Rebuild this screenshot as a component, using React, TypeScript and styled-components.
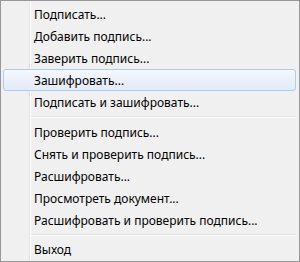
import React from 'react';
import styled, { createGlobalStyle } from 'styled-components';

const GlobalStyle = createGlobalStyle`
  html, body {
    margin: 0;
    padding: 0;
    background: #ffffff;
  }
`;

const Menu = styled.div`
  box-sizing: border-box;
  width: 300px;
  height: 262px;
  border: 1px solid #979797;
  padding: 2px 3px 1px 2px;
  background:
    linear-gradient(
      to right,
      transparent 28px,
      #e2e3e3 28px,
      #e2e3e3 29px,
      #ffffff 29px,
      #ffffff 30px,
      transparent 30px
    ),
    #f0f0f0;
  font-family: 'Segoe UI', 'Noto Sans', 'Open Sans', sans-serif;
  font-size: 12px;
  color: #000000;
  display: flex;
  flex-direction: column;
`;

const Item = styled.div<{ $active?: boolean }>`
  box-sizing: border-box;
  height: 22px;
  display: flex;
  align-items: center;
  padding-left: 30px;
  border: 1px solid ${(p) => (p.$active ? '#aeccef' : 'transparent')};
  border-radius: 3px;
  background: ${(p) =>
    p.$active
      ? 'linear-gradient(to bottom, #f5f8fc 0%, #ebf1fa 50%, #e2ebf8 100%)'
      : 'transparent'};
  white-space: nowrap;
`;

const Separator = styled.div<{ $size: number }>`
  height: ${(p) => p.$size}px;
  display: flex;
  flex-direction: column;
  justify-content: center;
  margin-left: 28px;

  &::before {
    content: '';
    height: 1px;
    background: #e2e3e3;
  }
  &::after {
    content: '';
    height: 1px;
    background: #ffffff;
  }
`;

const groups = [
  ['Подписать...', 'Добавить подпись...', 'Заверить подпись...', 'Зашифровать...', 'Подписать и зашифровать...'],
  [
    'Проверить подпись...',
    'Снять и проверить подпись...',
    'Расшифровать...',
    'Просмотреть документ...',
    'Расшифровать и проверить подпись...',
  ],
  ['Выход'],
];

const App = () => (
  <>
    <GlobalStyle />
    <Menu>
      {groups.map((items, gi) => (
        <React.Fragment key={gi}>
          {gi > 0 && <Separator $size={gi === 1 ? 8 : 7} />}
          {items.map((text) => (
            <Item key={text} $active={text === 'Зашифровать...'}>
              {text}
            </Item>
          ))}
        </React.Fragment>
      ))}
    </Menu>
  </>
);

export default App;
